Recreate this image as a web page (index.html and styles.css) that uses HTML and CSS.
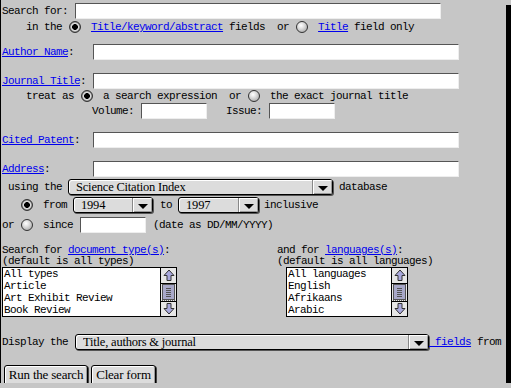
FILE: index.html
```html
<!DOCTYPE html>
<html lang="en">
<head>
    <meta charset="UTF-8">
    <title>General Search</title>
    <link rel="stylesheet" href="styles.css">
</head>
<body>
    <div class="panel">
        <form class="search">
            <div class="row r1">
                <label class="lbl w73" for="q">Search for:</label>
                <input class="txt wide" id="q" type="text">
            </div>
            <div class="row r2">
                <span class="ind">in the</span>
                <input type="radio" name="scope" class="rb" checked>
                <a href="#">Title/keyword/abstract</a>
                <span class="pre"> fields  or</span>
                <input type="radio" name="scope" class="rb">
                <a href="#">Title</a>
                <span class="pre"> field only</span>
            </div>
            <div class="row r3">
                <label class="lbl w91"><a href="#">Author Name</a>:</label>
                <input class="txt wide" type="text">
            </div>
            <div class="row r4">
                <label class="lbl w91"><a href="#">Journal Title</a>:</label>
                <input class="txt wide" type="text">
            </div>
            <div class="row r5">
                <span class="ind">treat as</span>
                <input type="radio" name="jt" class="rb" checked>
                <span class="pre">a search expression  or</span>
                <input type="radio" name="jt" class="rb">
                <span>the exact journal title</span>
            </div>
            <div class="row r6">
                <span class="vol">Volume:</span>
                <input class="txt short gap7" type="text">
                <span class="issue">Issue:</span>
                <input class="txt short gap7" type="text">
            </div>
            <div class="row r7">
                <label class="lbl w91"><a href="#">Cited Patent</a>:</label>
                <input class="txt wide" type="text">
            </div>
            <div class="row r8">
                <label class="lbl w91"><a href="#">Address</a>:</label>
                <input class="txt wide" type="text">
            </div>
            <div class="row r9">
                <span class="using">using the</span>
                <span class="dd dd-db">
                    <select><option>Science Citation Index</option></select>
                    <span class="dd-btn"></span>
                </span>
                <span class="after-dd">database</span>
            </div>
            <div class="row r10">
                <input type="radio" name="period" class="rb rb-first" checked>
                <span>from</span>
                <span class="dd dd-year">
                    <select><option>1994</option></select>
                    <span class="dd-btn"></span>
                </span>
                <span class="to">to</span>
                <span class="dd dd-year2">
                    <select><option>1997</option></select>
                    <span class="dd-btn"></span>
                </span>
                <span class="incl">inclusive</span>
            </div>
            <div class="row r11">
                <span>or</span>
                <input type="radio" name="period" class="rb">
                <span>since</span>
                <input class="txt short gap7" type="text">
                <span class="gap7">(date as DD/MM/YYYY)</span>
            </div>

            <div class="lists">
                <div class="col col-left">
                    <div class="head">Search for <a href="#">document type(s)</a>:</div>
                    <div class="head">(default is all types)</div>
                    <div class="listbox lb-types">
                        <div class="items">
                            <div>All types</div>
                            <div>Article</div>
                            <div>Art Exhibit Review</div>
                            <div>Book Review</div>
                        </div>
                        <svg class="sbar" width="15" height="48" viewBox="0 0 15 48">
                            <rect x="0" y="0" width="15" height="48" fill="#e6e6e6"/>
                            <path d="M8 2 L13 7.5 L10 7.5 L10 12.5 L6 12.5 L6 7.5 L3 7.5 Z" fill="#a9a9dd" stroke="#333" stroke-width="1"/>
                            <line x1="0" y1="15.5" x2="15" y2="15.5" stroke="#000"/>
                            <rect x="1.5" y="16.5" width="12" height="15" fill="#a8a8c8" stroke="#555"/>
                            <path d="M5 20.5h5M5 22.5h5M5 24.5h5M5 26.5h5M5 28.5h5" stroke="#555"/>
                            <line x1="1" y1="32.5" x2="15" y2="32.5" stroke="#666" stroke-dasharray="1 1"/>
                            <line x1="0" y1="33.5" x2="15" y2="33.5" stroke="#000"/>
                            <path d="M8 46 L13 40.5 L10 40.5 L10 35.5 L6 35.5 L6 40.5 L3 40.5 Z" fill="#a9a9dd" stroke="#333" stroke-width="1"/>
                        </svg>
                    </div>
                </div>
                <div class="col col-right">
                    <div class="head">and for <a href="#">languages(s)</a>:</div>
                    <div class="head">(default is all languages)</div>
                    <div class="listbox lb-langs">
                        <div class="items">
                            <div>All languages</div>
                            <div>English</div>
                            <div>Afrikaans</div>
                            <div>Arabic</div>
                        </div>
                        <svg class="sbar" width="15" height="48" viewBox="0 0 15 48">
                            <rect x="0" y="0" width="15" height="48" fill="#e6e6e6"/>
                            <path d="M8 2 L13 7.5 L10 7.5 L10 12.5 L6 12.5 L6 7.5 L3 7.5 Z" fill="#a9a9dd" stroke="#333" stroke-width="1"/>
                            <line x1="0" y1="15.5" x2="15" y2="15.5" stroke="#000"/>
                            <rect x="1.5" y="16.5" width="12" height="15" fill="#a8a8c8" stroke="#555"/>
                            <path d="M5 20.5h5M5 22.5h5M5 24.5h5M5 26.5h5M5 28.5h5" stroke="#555"/>
                            <line x1="1" y1="32.5" x2="15" y2="32.5" stroke="#666" stroke-dasharray="1 1"/>
                            <line x1="0" y1="33.5" x2="15" y2="33.5" stroke="#000"/>
                            <path d="M8 46 L13 40.5 L10 40.5 L10 35.5 L6 35.5 L6 40.5 L3 40.5 Z" fill="#a9a9dd" stroke="#333" stroke-width="1"/>
                        </svg>
                    </div>
                </div>
            </div>

            <div class="row r-display">
                <span>Display the</span>
                <span class="dd dd-display">
                    <select><option>Title, authors &amp; journal</option></select>
                    <span class="dd-btn"></span>
                </span>
                <a href="#" class="pre">&nbsp;fields</a>
                <span class="pre"> from</span>
            </div>

            <div class="buttons">
                <button type="submit" class="btn btn-run">Run the search</button>
                <button type="reset" class="btn btn-clear">Clear form</button>
            </div>
        </form>
    </div>
</body>
</html>
```

FILE: styles.css
```css
:root {
    --bg: #c6c6c6;
    --control: #dcdcdc;
    --link: #0000ee;
    --mono: "Liberation Mono", "DejaVu Sans Mono", monospace;
    --serif: "Liberation Serif", "DejaVu Serif", serif;
}
body {
    margin: 0;
    background-color: var(--bg);
    font-family: var(--mono);
    font-size: 11px;
    letter-spacing: -0.6px;
    color: #000;
}
.panel {
    box-sizing: border-box;
    width: 506px;
    height: 383px;
    overflow: hidden;
    border-left: 1px solid #000;
    padding-left: 1px;
    box-shadow: 5px 5px 0 #000;
}
a {
    color: var(--link);
}
.pre {
    white-space: pre;
}
.row {
    display: flex;
    align-items: center;
    height: 16px;
    white-space: nowrap;
}
.r1 { margin-top: 3px; }
.r2 { margin-top: 1px; height: 14px; }
.r3 { margin-top: 10px; }
.r4 { margin-top: 13px; }
.r5 { margin-top: 1px; height: 12px; }
.r6 { margin-top: 1px; }
.r7, .r8 { margin-top: 13px; }
.r9, .r10 { margin-top: 2px; }
.r11 { margin-top: 4px; }
.r-display { margin-top: 17px; }

.lbl { display: inline-block; }
.w73 { width: 73px; }
.w91 { width: 91px; }

/* text fields */
.txt {
    box-sizing: border-box;
    height: 16px;
    margin: 0;
    padding: 0 2px;
    border: 1px solid;
    border-color: #555 #eee #eee #555;
    background: #fff;
    font: inherit;
}
.wide { width: 366px; }
.short { width: 66px; }

/* radio buttons */
.rb {
    appearance: none;
    -webkit-appearance: none;
    box-sizing: border-box;
    width: 12px;
    height: 12px;
    margin: 0 10px 0 7px;
    border: 1px solid #333;
    border-radius: 50%;
    background: radial-gradient(circle at 40% 35%, #fff 0, #e4e4e4 30%, #9a9a9a 100%);
    flex: none;
}
.rb:checked {
    background: radial-gradient(circle, #000 0, #000 2.6px, #e8e8e8 3.2px, #cfcfcf 4px, #7a7a7a 5px);
}
.rb-first { margin-left: 19px; }

/* drop-downs */
.dd {
    box-sizing: border-box;
    display: flex;
    height: 16px;
    margin-left: 6px;
    border: 1px solid #000;
    border-radius: 3px;
    background: var(--control);
    box-shadow: inset 1px 1px 0 #fff, 1px 1px 0 #555;
    overflow: hidden;
    flex: none;
}
.dd select {
    appearance: none;
    -webkit-appearance: none;
    flex: 1;
    min-width: 0;
    height: 14px;
    margin: 0;
    padding: 0 0 0 7px;
    border: none;
    background: transparent;
    font-family: var(--serif);
    font-size: 12.5px;
    letter-spacing: -0.2px;
    color: #000;
    line-height: 14px;
}
.dd-btn {
    display: flex;
    align-items: center;
    justify-content: center;
    width: 19px;
    border-left: 1px solid #888;
    box-shadow: inset 1px 1px 0 #fff, inset -1px -1px 0 #999;
    background: var(--control);
}
.dd-btn::after {
    content: "";
    margin-top: 3px;
    border-left: 5px solid transparent;
    border-right: 5px solid transparent;
    border-top: 5px solid #000;
}
.dd-db { width: 265px; }
.dd-year { width: 80px; }
.dd-year2 { width: 81px; }
.dd-display { width: 354px; margin-left: 7px; }

/* list boxes */
.lists {
    display: flex;
    margin-top: 12px;
}
.col-left { width: 275px; }
.head {
    line-height: 11px;
    height: 11px;
    white-space: nowrap;
}
.listbox {
    display: flex;
    box-sizing: border-box;
    height: 50px;
    border: 1px solid #000;
    background: #fff;
}
.lb-types { width: 175px; }
.lb-langs { width: 122px; margin-left: 9px; }
.items {
    flex: 1;
    padding-left: 1px;
    line-height: 12px;
    white-space: nowrap;
    overflow: hidden;
}
.sbar {
    display: block;
    border-left: 1px solid #000;
    flex: none;
}

/* buttons */
.buttons {
    display: flex;
    margin-top: 15px;
    padding-left: 2px;
}
.btn {
    box-sizing: border-box;
    height: 21px;
    margin: 0 3px 0 0;
    padding: 0 0 2px;
    border: 1px solid #000;
    border-radius: 3px;
    background: var(--control);
    box-shadow: inset 1px 1px 0 #fff, inset -1px -1px 0 #999, 1px 1px 0 #444;
    font-family: var(--serif);
    font-size: 13px;
    letter-spacing: -0.2px;
    color: #000;
}
.btn-run { width: 84px; }
.btn-clear { width: 65px; }

/* spacing helpers, kept last so they win over the control rules */
.ind { margin-left: 24px; }
.vol { margin-left: 90px; }
.issue { margin-left: 19px; }
.gap7 { margin-left: 7px; }
.using { margin-left: 6px; }
.to { margin-left: 7px; }
.incl { margin-left: 5px; }
.after-dd { margin-left: 6px; }
```
